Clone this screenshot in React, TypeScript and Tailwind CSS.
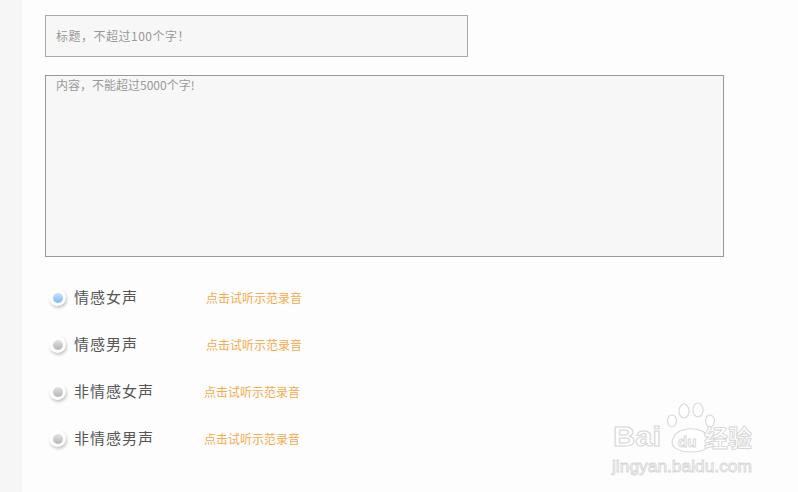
import React from "react";

const font = { fontFamily: '"Microsoft YaHei", "Noto Sans CJK SC", "Noto Sans", sans-serif' };

function Radio({ active }: { active?: boolean }) {
  return (
    <div className="w-[17px] h-[17px] rounded-full bg-white shadow-[1px_2px_3px_rgba(0,0,0,0.22)] flex items-center justify-center">
      <div
        className={
          active
            ? "w-[10px] h-[10px] rounded-full bg-gradient-to-b from-[#c6e2ff] to-[#7ab8f5]"
            : "w-[10px] h-[10px] rounded-full bg-gradient-to-b from-[#e4e4e4] to-[#b4b4b4]"
        }
      />
    </div>
  );
}

const rows = [
  { label: "情感女声", active: true, linkLeft: "ml-[68px]" },
  { label: "情感男声", active: false, linkLeft: "ml-[68px]" },
  { label: "非情感女声", active: false, linkLeft: "ml-[50px]" },
  { label: "非情感男声", active: false, linkLeft: "ml-[50px]" },
];

function Watermark() {
  return (
    <svg className="absolute left-[600px] top-[398px]" width="170" height="84" viewBox="0 0 170 84">
      <g fill="#ffffff" stroke="#d9d9d9" strokeWidth="1.2">
        <ellipse cx="84" cy="13" rx="5" ry="7" />
        <ellipse cx="98" cy="12" rx="5" ry="7" />
        <ellipse cx="72" cy="23" rx="4.5" ry="6" />
        <ellipse cx="110" cy="23" rx="4.5" ry="6" />
        <path d="M74 39 C79 28 103 28 108 39 C114 48 105 54 91 54 C77 54 68 48 74 39 Z" />
      </g>
      <text x="13" y="48" fontFamily="Liberation Sans, sans-serif" fontSize="27" fontWeight="700" fill="#ffffff" stroke="#d6d6d6" strokeWidth="1" textLength="48" lengthAdjust="spacingAndGlyphs">Bai</text>
      <text x="78" y="49" fontFamily="Liberation Sans, sans-serif" fontSize="15" fontWeight="700" fill="#ffffff" stroke="#d6d6d6" strokeWidth="0.9">du</text>
      <text x="104" y="49" fontFamily='"Noto Sans CJK SC", sans-serif' fontSize="24" fontWeight="700" fill="#ffffff" stroke="#d6d6d6" strokeWidth="0.9">经验</text>
      <text x="12" y="74" fontFamily="Liberation Sans, sans-serif" fontSize="16" fill="#ffffff" stroke="#d6d6d6" strokeWidth="0.8" textLength="140" lengthAdjust="spacingAndGlyphs">jingyan.baidu.com</text>
    </svg>
  );
}

export default function App() {
  return (
    <div className="relative w-[798px] h-[492px] flex bg-[#fdfdfd] overflow-hidden" style={font}>
      <div className="w-[22px] h-full bg-[#f6f6f6]" />
      <div className="flex flex-col pl-[23px] pt-[15px]">
        <div className="w-[423px] h-[42px] border border-[#aaaaaa] bg-[#f7f7f7] flex items-center pl-[10px] text-[12px] text-[#999999] tracking-[0.5px]">
          标题，不超过100个字！
        </div>
        <div className="mt-[18px] w-[679px] h-[182px] border border-[#999999] bg-[#f7f7f7] pl-[10px] pt-[1px] text-[12px] leading-[16px] text-[#999999]">
          内容，不能超过5000个字!
        </div>
        <div className="mt-[17px] flex flex-col">
          {rows.map((r) => (
            <div key={r.label} className="h-[47px] flex items-center">
              <div className="ml-[4px]">
                <Radio active={r.active} />
              </div>
              <span className="ml-[8px] text-[15px] text-[#555555] tracking-[1px]">{r.label}</span>
              <span className={r.linkLeft + " text-[12px] text-[#f9a94c]"}>点击试听示范录音</span>
            </div>
          ))}
        </div>
      </div>
      <Watermark />
    </div>
  );
}
